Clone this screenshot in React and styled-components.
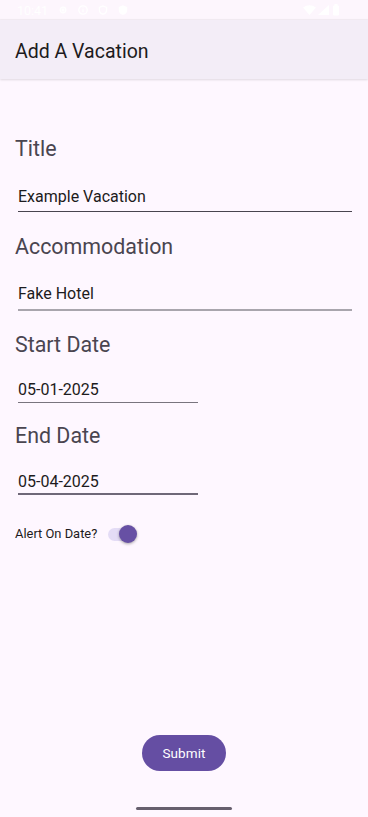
import React from "react";
import styled, { createGlobalStyle } from "styled-components";

const Global = createGlobalStyle`
  html, body { margin: 0; padding: 0; background: #fef7ff; }
  body { font-family: Roboto, "Noto Sans", sans-serif; }
  * { box-sizing: border-box; }
`;

const Screen = styled.div`
  width: 368px;
  height: 817px;
  display: flex;
  flex-direction: column;
  background: #fef7ff;
  overflow: hidden;
`;

const StatusBar = styled.div`
  height: 20px;
  display: flex;
  align-items: center;
  padding: 0 27px 0 17px;
  color: #ffffff;
  font-size: 12.5px;
  background: #fdf6fd;
`;

const StatusLeft = styled.div`
  display: flex;
  align-items: center;
  gap: 10px;
`;

const StatusRight = styled.div`
  margin-left: auto;
  display: flex;
  align-items: center;
  gap: 2px;
`;

const AppBar = styled.header`
  height: 59px;
  display: flex;
  align-items: center;
  padding: 3px 15px 0;
  background: #f3edf7;
  box-shadow: 0 1px 2px rgba(0, 0, 0, 0.12), 0 -1px 1px rgba(0, 0, 0, 0.04);
  position: relative;
  z-index: 1;
`;

const AppTitle = styled.h1`
  margin: 0;
  font-size: 19.5px;
  font-weight: 400;
  color: #1d1b20;
`;

const Form = styled.main`
  flex: 1;
  display: flex;
  flex-direction: column;
  padding: 58px 16px 0 15px;
`;

const Label = styled.div`
  font-size: 21.4px;
  line-height: 24px;
  color: #4a4550;
  margin-top: ${(p) => p.$gap}px;
`;

const Field = styled.input`
  box-sizing: content-box;
  display: block;
  margin: ${(p) => p.$gap}px 0 0 3px;
  width: ${(p) => (p.$short ? "180px" : "334px")};
  height: 20px;
  padding: 0 0 ${(p) => p.$pad}px 0;
  border: none;
  border-bottom: ${(p) => p.$line};
  background: transparent;
  font-family: Roboto, "Noto Sans", sans-serif;
  font-size: 16px;
  line-height: 20px;
  color: #1d1b20;
  outline: none;
  border-radius: 0;
`;

const SwitchRow = styled.div`
  display: flex;
  align-items: center;
  gap: 11px;
  margin-top: 29px;
  height: 20px;
`;

const SwitchLabel = styled.span`
  font-size: 12.9px;
  line-height: 16px;
  color: #1d1b20;
`;

const Track = styled.div`
  position: relative;
  width: 28px;
  height: 13px;
  border-radius: 7px;
  background: #e4dcf6;
`;

const Thumb = styled.div`
  position: absolute;
  right: -1px;
  top: 50%;
  width: 18px;
  height: 18px;
  margin-top: -9px;
  border-radius: 50%;
  background: #6750a4;
  box-shadow: 0 1px 3px rgba(0, 0, 0, 0.35);
`;

const Footer = styled.footer`
  display: flex;
  flex-direction: column;
  align-items: center;
  padding-bottom: 7px;
`;

const SubmitButton = styled.button`
  width: 84px;
  height: 36px;
  border: none;
  border-radius: 18px;
  background: #654ea3;
  color: #ffffff;
  font-family: Roboto, "Noto Sans", sans-serif;
  font-size: 13.5px;
  font-weight: 400;
  letter-spacing: 0.1px;
  cursor: pointer;
`;

const NavHandle = styled.div`
  margin-top: 36px;
  width: 96px;
  height: 3px;
  border-radius: 2px;
  background: #675f6e;
`;

const Icon = ({ children, w = 10 }) => (
  <svg width={w} height="10" viewBox="0 0 10 10" fill="none" stroke="#fff" strokeWidth="1.3">
    {children}
  </svg>
);

export default function App() {
  return (
    <>
      <Global />
      <Screen>
        <StatusBar>
          <StatusLeft>
            <span>10:41</span>
            <Icon>
              <circle cx="5" cy="5" r="2.8" />
              <circle cx="5" cy="5" r="1" fill="#fff" />
            </Icon>
            <Icon>
              <circle cx="5" cy="5" r="4.2" />
              <path d="M5 4.3v3M5 2.6v.6" />
            </Icon>
            <Icon>
              <path d="M5 1l3.6 1.4v2.8c0 2-1.6 3.4-3.6 4-2-.6-3.6-2-3.6-4V2.4z" />
            </Icon>
            <Icon>
              <path d="M5 1l3.6 1.4v2.8c0 2-1.6 3.4-3.6 4-2-.6-3.6-2-3.6-4V2.4z" fill="#fff" />
            </Icon>
          </StatusLeft>
          <StatusRight>
            <svg width="13" height="10" viewBox="0 0 13 10">
              <path d="M0 2.5Q6.5-2 13 2.5L6.5 10z" fill="#fff" />
            </svg>
            <svg width="11" height="10" viewBox="0 0 11 10">
              <path d="M11 0v10H0z" fill="#fff" />
            </svg>
            <svg width="10" height="12" viewBox="0 0 10 12">
              <rect x="2" y="1.5" width="6" height="10" rx="1" fill="#fff" />
              <rect x="3.5" y="0" width="3" height="2" fill="#fff" />
            </svg>
          </StatusRight>
        </StatusBar>
        <AppBar>
          <AppTitle>Add A Vacation</AppTitle>
        </AppBar>
        <Form>
          <Label $gap={0}>Title</Label>
          <Field $gap={26} $pad={4} $line="1px solid #49454f" defaultValue="Example Vacation" />
          <Label $gap={23}>Accommodation</Label>
          <Field $gap={25} $pad={5} $line="2px solid #a9a5ad" defaultValue="Fake Hotel" />
          <Label $gap={22}>Start Date</Label>
          <Field $gap={23} $pad={2} $short $line="1px solid #79747e" defaultValue="05-01-2025" />
          <Label $gap={21}>End Date</Label>
          <Field $gap={24} $pad={1} $short $line="2px solid #6f6878" defaultValue="05-04-2025" />
          <SwitchRow>
            <SwitchLabel>Alert On Date?</SwitchLabel>
            <Track>
              <Thumb />
            </Track>
          </SwitchRow>
        </Form>
        <Footer>
          <SubmitButton>Submit</SubmitButton>
          <NavHandle />
        </Footer>
      </Screen>
    </>
  );
}
